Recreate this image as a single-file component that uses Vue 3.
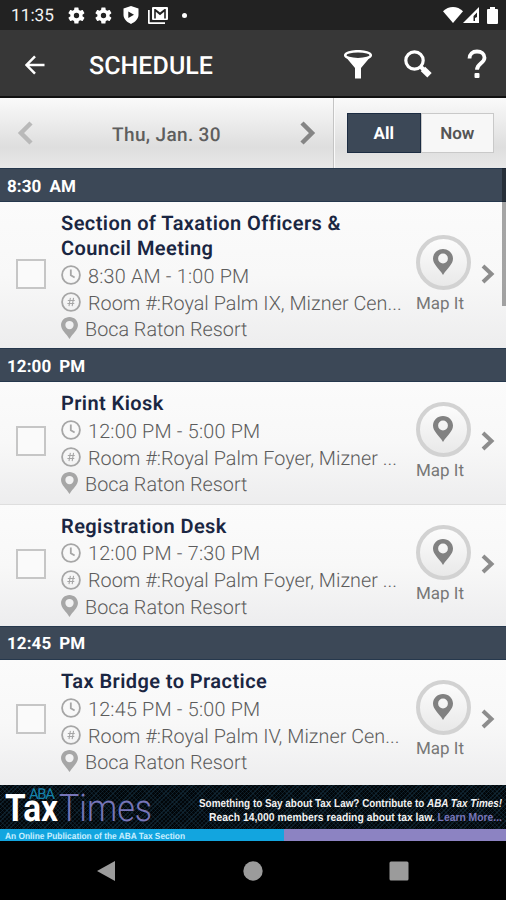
<script setup>
const sections = [
  {
    time: '8:30', half: 'AM',
    items: [
      { title: ['Section of Taxation Officers &', 'Council Meeting'], when: '8:30 AM - 1:00 PM', room: 'Room #:Royal Palm IX, Mizner Cen...', place: 'Boca Raton Resort' },
    ],
  },
  {
    time: '12:00', half: 'PM',
    items: [
      { title: ['Print Kiosk'], when: '12:00 PM - 5:00 PM', room: 'Room #:Royal Palm Foyer, Mizner ...', place: 'Boca Raton Resort' },
      { title: ['Registration Desk'], when: '12:00 PM - 7:30 PM', room: 'Room #:Royal Palm Foyer, Mizner ...', place: 'Boca Raton Resort' },
    ],
  },
  {
    time: '12:45', half: 'PM',
    items: [
      { title: ['Tax Bridge to Practice'], when: '12:45 PM - 5:00 PM', room: 'Room #:Royal Palm IV, Mizner Cen...', place: 'Boca Raton Resort' },
    ],
  },
]
const gear = 'M19.4 13a7.5 7.5 0 0 0 0-2l2.1-1.6a.5.5 0 0 0 .1-.7l-2-3.4a.5.5 0 0 0-.6-.2l-2.5 1a7.300 7.300 0 0 0-1.700-1l-.4-2.600a.5.5 0 0 0-.5-.4h-4a.5.5 0 0 0-.5.4L9 5.100a7.300 7.300 0 0 0-1.700 1l-2.500-1a.5.5 0 0 0-.6.2l-2 3.400a.5.5 0 0 0 .1.700L4.500 11a7.500 7.500 0 0 0 0 2l-2.200 1.600a.5.5 0 0 0-.1.700l2 3.400c.1.200.4.300.6.200l2.500-1a7.300 7.300 0 0 0 1.700 1l.4 2.600c0 .2.200.4.500.4h4c.3 0 .5-.2.500-.4l.4-2.600a7.300 7.300 0 0 0 1.700-1l2.500 1c.2.100.5 0 .6-.2l2-3.400a.5.5 0 0 0-.1-.700zM12 15.300a3.300 3.300 0 1 1 0-6.600 3.300 3.300 0 0 1 0 6.600z'
const pin = 'M10 0C4.500 0 0 4.200 0 9.600 0 15.500 6 19.500 10 26c4-6.500 10-10.500 10-16.400C20 4.200 15.500 0 10 0zm0 4.600a4.900 4.900 0 1 1 0 9.800 4.900 4.900 0 0 1 0-9.800z'
</script>

<template>
  <div class="screen">
    <header class="status">
      <span class="clock">11:35</span>
      <svg class="gear" viewBox="1.500 1.500 21 21"><path :d="gear" /></svg>
      <svg class="gear second" viewBox="1.500 1.500 21 21"><path :d="gear" /></svg>
      <svg class="shield" viewBox="0 0 16 18"><path fill-rule="evenodd" d="M8 0l7.500 2.600v6.200c0 4-3 7-7.500 9.200C3.500 15.800.5 12.800.5 8.800V2.600zM5.300 5.500v6.500L11 8.700z" /></svg>
      <svg class="mail" viewBox="0 0 20 17"><path fill-rule="evenodd" d="M5 0h14a1 1 0 0 1 1 1v11a1 1 0 0 1-1 1H5a1 1 0 0 1-1-1V1a1 1 0 0 1 1-1zm1.200 2v9.500h1.600V4.800L12 8.300l4.200-3.500v6.700h1.600V2H16.500L12 5.600 7.500 2z" /><path d="M0 3h1.700v12.300H17V17H1a1 1 0 0 1-1-1z" /></svg>
      <i class="dot"></i>
      <span class="grow"></span>
      <svg class="wifi" viewBox="0 0 20 16"><path d="M10 16L0 4.300C5.500-1.400 14.500-1.400 20 4.300z" /></svg>
      <svg class="signal" viewBox="0 0 16 16"><path fill-rule="evenodd" d="M16 0v16H0zM14 5.500L10.500 9v5H12v-3l2-1z" /></svg>
      <svg class="battery" viewBox="0 0 11 17"><path d="M3 0h5v2h2a1 1 0 0 1 1 1v13a1 1 0 0 1-1 1H1a1 1 0 0 1-1-1V3a1 1 0 0 1 1-1h2z" /></svg>
    </header>

    <nav class="appbar">
      <svg class="back" viewBox="0 0 20 20"><path d="M19.500 10H1.800M10 1.300L1.500 10l8.500 8.700" /></svg>
      <h1>SCHEDULE</h1>
      <svg class="funnel" viewBox="0 0 28 29"><path d="M.5 5.500L11 18v10.500h6V18L27.500 5.500z" /><ellipse cx="14" cy="5.200" rx="12.800" ry="4" /></svg>
      <svg class="search" viewBox="0 0 28 28"><circle cx="10.500" cy="10.500" r="8.700" /><path d="M16.500 16.500l4 4" stroke-width="4" /><path d="M19 19l6.500 6.300" stroke-width="6.200" /></svg>
      <svg class="help" viewBox="0 0 20 30"><path d="M2.500 9.500C2.500 5 5.500 2.500 10 2.500s7.500 2.500 7.500 6.300c0 5.500-7.500 5.700-7.500 12" /><rect x="7.500" y="24" width="5" height="5" rx="1" /></svg>
    </nav>

    <div class="datebar">
      <div class="day">
        <svg class="arrow faded" viewBox="0 0 16 24"><path d="M14 2L4 12l10 10" /></svg>
        <span>Thu, Jan. 30</span>
        <svg class="arrow" viewBox="0 0 16 24"><path d="M2 2l10 10L2 22" /></svg>
      </div>
      <div class="filter">
        <span class="tab active">All</span>
        <span class="tab">Now</span>
      </div>
    </div>

    <main class="list">
      <section v-for="s in sections" :key="s.time">
        <h2><span>{{ s.time }}</span><span>{{ s.half }}</span></h2>
        <article v-for="item in s.items" :key="item.title[0]" class="item" :class="{ tall: item.title.length > 1 }">
          <i class="check"></i>
          <div class="info">
            <h3><span v-for="line in item.title" :key="line">{{ line }}</span></h3>
            <p>
              <svg class="round" viewBox="0 0 22 22"><circle cx="11" cy="11" r="9.800" /><path d="M10.800 5v6.300l4.200 2.500" /></svg>
              <span>{{ item.when }}</span>
            </p>
            <p class="room">
              <svg class="round" viewBox="0 0 22 22"><circle cx="11" cy="11" r="9.800" /><path class="thin" d="M10.300 6.500l-1.500 9M13.800 6.500l-1.500 9M7.500 9.300h7.600M7 12.700h7.600" /></svg>
              <span>{{ item.room }}</span>
            </p>
            <p class="place">
              <svg class="pin" viewBox="0 0 20 26"><path :d="pin" /></svg>
              <span>{{ item.place }}</span>
            </p>
          </div>
          <div class="map">
            <div class="disc"><svg viewBox="0 0 20 26"><path :d="pin" /></svg></div>
            <span>Map It</span>
          </div>
          <svg class="chevron" viewBox="0 0 14 20"><path d="M2 2l8.500 8L2 18" /></svg>
        </article>
      </section>
      <i class="scrollbar"></i>
    </main>

    <aside class="ad">
      <svg viewBox="0 0 506 43">
        <text class="aba" x="29" y="14" textLength="26">ABA</text>
        <text class="tax" x="5" y="36" textLength="53" lengthAdjust="spacingAndGlyphs">Tax</text>
        <text class="times" x="59" y="36" textLength="93" lengthAdjust="spacingAndGlyphs">Times</text>
        <text class="copy" x="199" y="22" textLength="303" lengthAdjust="spacingAndGlyphs">Something to Say about Tax Law? Contribute to <tspan class="em">ABA Tax Times!</tspan></text>
        <text class="copy" x="209" y="36" textLength="293" lengthAdjust="spacingAndGlyphs">Reach 14,000 members reading about tax law. <tspan class="more">Learn More...</tspan></text>
      </svg>
      <div class="strip">
        <svg viewBox="0 0 284 12"><text x="5" y="9.500" textLength="180" lengthAdjust="spacingAndGlyphs">An Online Publication of the ABA Tax Section</text></svg>
      </div>
    </aside>

    <footer class="navbar">
      <svg viewBox="0 0 20 22"><path d="M1 11L19 1v20z" /></svg>
      <svg viewBox="0 0 20 22"><circle cx="10" cy="11" r="9.700" /></svg>
      <svg viewBox="0 0 20 22"><rect x=".5" y="1.500" width="19" height="19" rx="1.500" /></svg>
    </footer>
  </div>
</template>

<style>
body { margin: 0; background: #000; }
</style>

<style scoped>
.screen { width: 506px; height: 900px; display: flex; flex-direction: column; overflow: hidden; font-family: Roboto, sans-serif; text-rendering: geometricPrecision; }
svg { display: block; flex: none; }
h1, h2, h3, p { margin: 0; }
i { display: block; flex: none; }

.status { height: 30px; flex: none; background: #222; display: flex; align-items: center; box-sizing: border-box; padding: 0 8px 0 11px; color: #f2f2f2; fill: #fff; }
.clock { width: 57px; font-size: 17.300px; padding-top: 2px; box-sizing: border-box; }
.gear { width: 17px; height: 17px; }
.second { margin-left: 10px; }
.shield { width: 16px; height: 18px; margin-left: 11px; }
.mail { width: 20px; height: 17px; margin-left: 9px; }
.dot { width: 5px; height: 5px; border-radius: 50%; background: #fff; margin-left: 14px; }
.grow { flex: 1; }
.wifi { width: 20px; height: 16px; }
.signal { width: 16px; height: 16px; }
.battery { width: 11px; height: 17px; margin-left: 8px; }

.appbar { height: 68px; flex: none; box-sizing: border-box; background: #373737; border-bottom: 2px solid #111; display: flex; align-items: center; padding: 3px 19px 0 25px; color: #fff; fill: #fff; }
.back { width: 20px; height: 20px; fill: none; stroke: #fff; stroke-width: 2.500; }
h1 { flex: 1; margin-left: 44px; padding-top: 4px; font-size: 25px; line-height: 30px; font-weight: 500; letter-spacing: .05px; }
.funnel { width: 28px; height: 29px; }
.funnel ellipse { fill: #373737; stroke: #fff; stroke-width: 2.500; }
.search { width: 28px; height: 28px; margin-left: 32px; margin-top: -2px; fill: none; stroke: #fff; stroke-width: 3.200; }
.help { width: 20px; height: 30px; margin-left: 35px; margin-top: -2px; }
.help path { fill: none; stroke: #fff; stroke-width: 3.800; }

.datebar { height: 70px; flex: none; display: flex; background: linear-gradient(#fafafa, #e6e6e6 50%, #dedede 70%, #e8e8e8); }
.day { width: 334px; box-sizing: border-box; border-right: 1px solid #c4c4c4; display: flex; align-items: center; justify-content: space-between; padding: 0 17px 0 17px; color: #5e5e5e; font-size: 19px; font-weight: 500; letter-spacing: .35px; }
.day span { padding-top: 2px; }
.arrow { width: 16px; height: 24px; fill: none; stroke: #858585; stroke-width: 4.500; }
.faded { stroke: #b9b9b9; }
.filter { flex: 1; display: flex; padding: 15px 12px 15px 12px; border-left: 1px solid #fafafa; }
.tab { flex: 1; display: flex; align-items: center; justify-content: center; background: #f7f7f7; border: 1px solid #c9c9c9; color: #555; font-size: 17px; font-weight: 600; padding-top: 2px; }
.active { background: #3c4857; border-color: #1c2c42; color: #fff; font-weight: 700; }

.list { position: relative; height: 617px; flex: none; overflow: hidden; }
h2 { height: 34px; box-sizing: border-box; background: #3c4857; border: 1px solid #26384d; border-width: 1px 0; color: #fff; font-size: 17px; line-height: 36px; font-weight: 700; padding-left: 7px; display: flex; gap: 8px; letter-spacing: .1px; }
section:last-of-type h2 { line-height: 34px; }
.item { height: 122px; box-sizing: border-box; display: flex; padding: 9px 0 0 16px; background: linear-gradient(#fbfbfb, #f8f8f8 50%, #ededee); }
.item + .item { border-top: 1px solid #dedede; padding-top: 8.500px; }
.tall { height: 146px; }
section:last-of-type .item { height: 126px; }
.check { width: 30px; height: 30px; box-sizing: border-box; border: 2px solid #c6c6c6; background: #fafafa; margin-top: 35px; }
.tall .check, .tall .map, .tall .chevron { transform: translateY(13px); }
.info { width: 354px; margin-left: 15px; flex: none; }
h3 { font-size: 20px; line-height: 25px; font-weight: 600; color: #1a2642; letter-spacing: .42px; padding-bottom: 2px; }
h3 span { display: block; white-space: nowrap; }
p { height: 26.700px; display: flex; align-items: center; gap: 7px; color: #5c5c5c; font-size: 19.800px; font-weight: 300; white-space: nowrap; letter-spacing: .21px; }
.room { letter-spacing: .02px; }
.place { letter-spacing: 0; }
.round { width: 20px; height: 20px; margin-top: -2px; fill: none; stroke: #a6a6a6; stroke-width: 2; }
.round .thin { stroke-width: 1.200; }
.pin { width: 17px; height: 22px; margin-top: -3px; fill: #a6a6a6; }
.map { width: 56px; flex: none; display: flex; flex-direction: column; align-items: center; margin-top: 11px; color: #777; font-size: 17px; }
.disc { width: 55px; height: 55px; box-sizing: border-box; border: 4px solid #d2d2d2; border-radius: 50%; background: linear-gradient(#fcfcfc, #e9e9e9); display: flex; align-items: center; justify-content: center; }
.disc svg { width: 20px; height: 26px; fill: #818181; margin-top: -1px; }
.map span { line-height: 20px; margin: 4px 6px 0 0; white-space: nowrap; }
.chevron { width: 14px; height: 20px; margin: 40px 0 0 10px; fill: none; stroke: #8d8d8d; stroke-width: 4; }
.scrollbar { position: absolute; top: 0; right: 0; width: 4px; height: 138px; background: rgba(0, 0, 0, .34); }

.ad { height: 56px; flex: none; display: flex; flex-direction: column; justify-content: space-between; background: repeating-linear-gradient(45deg, transparent 0 2px, rgba(28, 61, 80, .3) 2px 3px), repeating-linear-gradient(-45deg, #020609 0 2px, #0c1d28 2px 3px); }
.ad > svg { width: 506px; height: 43px; font-family: Roboto, sans-serif; }
.aba { font-size: 15px; fill: #1583ad; }
.tax { font-size: 38px; font-weight: 700; fill: #fff; }
.times { font-size: 38px; font-weight: 300; fill: #7775b8; }
.copy { font: 700 11.500px "Liberation Sans", sans-serif; fill: #f1f1f1; }
.em { font-style: italic; }
.more { fill: #7775b8; }
.strip { height: 12px; background: #8c83c2; }
.strip svg { width: 284px; height: 12px; background: #12a5df; }
.strip text { font: 700 9px "Liberation Sans", sans-serif; fill: #c9efff; }

.navbar { flex: 1; background: #000; display: flex; align-items: center; justify-content: space-between; padding: 0 97px 0 96px; fill: #9b9b9b; }
.navbar svg { width: 20px; height: 22px; }
</style>
